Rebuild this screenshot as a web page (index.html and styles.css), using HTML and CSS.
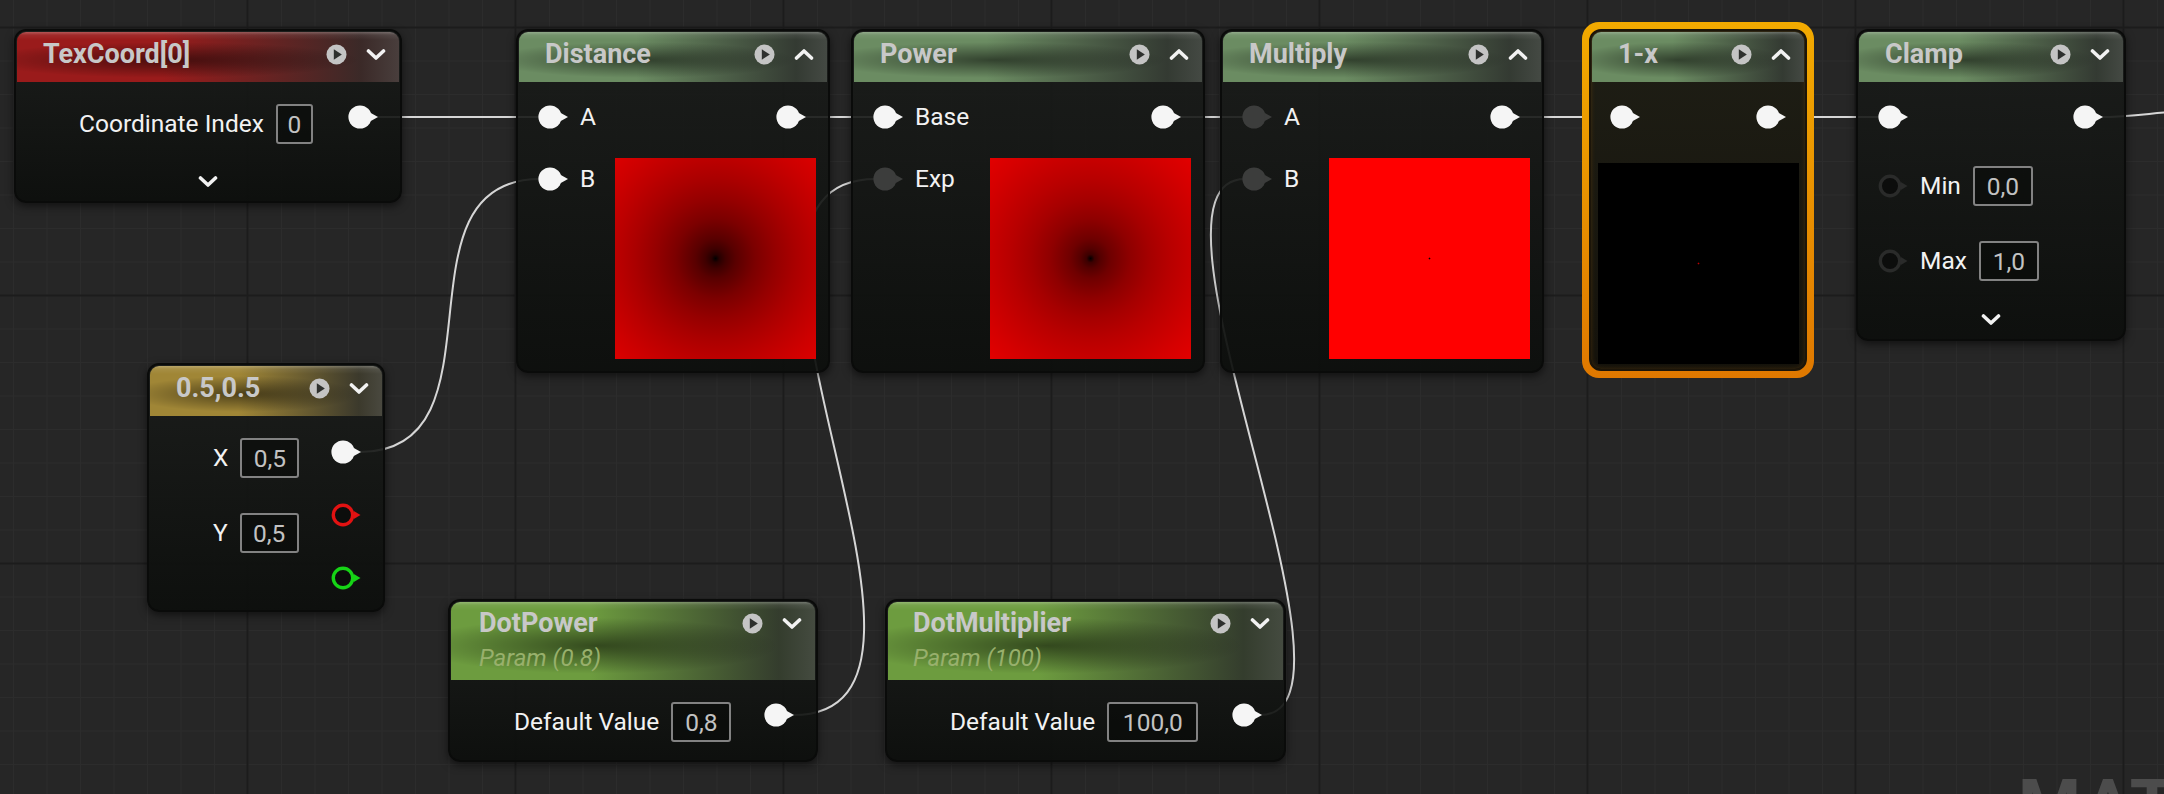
FILE: index.html
```html
<!DOCTYPE html>
<html>
<head>
<meta charset="utf-8">
<link rel="stylesheet" href="styles.css">
</head>
<body>
<svg class="defs" width="0" height="0">
  <defs>
    <radialGradient id="pg" cx="45%" cy="40%" r="60%">
      <stop offset="0" stop-color="#ffffff"/>
      <stop offset="0.7" stop-color="#f4f4f4"/>
      <stop offset="1" stop-color="#d0d0d0"/>
    </radialGradient>
    <symbol id="pin" viewBox="0 0 31 24"><circle cx="12" cy="12" r="11.6" fill="currentColor"/><path d="M22.4 7.8 L30 12 L22.4 16.2Z" fill="currentColor"/></symbol>
    <symbol id="ring" viewBox="0 0 31 24"><circle cx="12" cy="12" r="9.7" fill="#0c0d0c" stroke="currentColor" stroke-width="3.4"/><path d="M22.8 8 L29.5 12 L22.8 16Z" fill="currentColor"/></symbol>
    <symbol id="play" viewBox="0 0 22 22"><circle cx="11" cy="11" r="10.5" fill="currentColor"/><path d="M8.2 5.6 L16.6 11 L8.2 16.4Z" fill="#2e302e"/></symbol>
    <symbol id="chev" viewBox="0 0 20 13"><path d="M2.5 3 L10 10 L17.5 3" fill="none" stroke="currentColor" stroke-width="3.6" stroke-linecap="round" stroke-linejoin="round"/></symbol>
    <symbol id="chevup" viewBox="0 0 20 13"><path d="M2.5 10 L10 3 L17.5 10" fill="none" stroke="currentColor" stroke-width="3.6" stroke-linecap="round" stroke-linejoin="round"/></symbol>
  </defs>
</svg>

<div class="canvas">
  <svg class="wires" width="2164" height="794" viewBox="0 0 2164 794">
    <path d="M372 117 L540 117"/>
    <path d="M360 452 C511 452 388 179 540 179"/>
    <path d="M800 117 L876 117"/>
    <path d="M793 715 C1000 715 668 179 876 179"/>
    <path d="M1175 117 L1245 117"/>
    <path d="M1260 715 C1384 715 1121 179 1245 179"/>
    <path d="M1514 117 L1613 117"/>
    <path d="M1780 117 L1881 117"/>
    <path d="M2098 117 C2134 117 2150 113 2170 112"/>
  </svg>

  <!-- TexCoord -->
  <div class="node n-texcoord">
    <div class="hdr h-red"><span class="title">TexCoord[0]</span><svg class="play"><use href="#play"/></svg><svg class="chev"><use href="#chev"/></svg></div>
    <div class="body col">
      <div class="io io-tc">
        <div class="ins"><div class="prop"><span class="lbl">Coordinate Index</span><span class="val w37">0</span></div></div>
        <div class="outs"><svg class="pin"><use href="#pin"/></svg></div>
      </div>
      <svg class="chev more"><use href="#chev"/></svg>
    </div>
  </div>

  <!-- Distance -->
  <div class="node n-distance">
    <div class="hdr h-green"><span class="title">Distance</span><svg class="play"><use href="#play"/></svg><svg class="chev"><use href="#chevup"/></svg></div>
    <div class="body op">
      <div class="ins pins">
        <div class="pinrow"><svg class="pin"><use href="#pin"/></svg><span class="lbl">A</span></div>
        <div class="pinrow"><svg class="pin"><use href="#pin"/></svg><span class="lbl">B</span></div>
      </div>
      <div class="outs prevcol">
        <svg class="pin outpin"><use href="#pin"/></svg>
        <div class="preview p-dist"></div>
      </div>
    </div>
  </div>

  <!-- Power -->
  <div class="node n-power">
    <div class="hdr h-green"><span class="title">Power</span><svg class="play"><use href="#play"/></svg><svg class="chev"><use href="#chevup"/></svg></div>
    <div class="body op">
      <div class="ins pins">
        <div class="pinrow"><svg class="pin"><use href="#pin"/></svg><span class="lbl">Base</span></div>
        <div class="pinrow"><svg class="pin dim"><use href="#pin"/></svg><span class="lbl">Exp</span></div>
      </div>
      <div class="outs prevcol">
        <svg class="pin outpin"><use href="#pin"/></svg>
        <div class="preview p-pow"></div>
      </div>
    </div>
  </div>

  <!-- Multiply -->
  <div class="node n-multiply">
    <div class="hdr h-green"><span class="title">Multiply</span><svg class="play"><use href="#play"/></svg><svg class="chev"><use href="#chevup"/></svg></div>
    <div class="body op">
      <div class="ins pins">
        <div class="pinrow"><svg class="pin dim"><use href="#pin"/></svg><span class="lbl">A</span></div>
        <div class="pinrow"><svg class="pin dim"><use href="#pin"/></svg><span class="lbl">B</span></div>
      </div>
      <div class="outs prevcol">
        <svg class="pin outpin"><use href="#pin"/></svg>
        <div class="preview p-mul"></div>
      </div>
    </div>
  </div>

  <!-- 1-x (selected) -->
  <div class="sel">
    <div class="node n-onex">
      <div class="hdr h-green"><span class="title">1-x</span><svg class="play"><use href="#play"/></svg><svg class="chev"><use href="#chevup"/></svg></div>
      <div class="body col">
        <div class="io io-onex"><svg class="pin"><use href="#pin"/></svg><svg class="pin"><use href="#pin"/></svg></div>
        <div class="preview p-onex"></div>
      </div>
    </div>
  </div>

  <!-- Clamp -->
  <div class="node n-clamp">
    <div class="hdr h-green"><span class="title">Clamp</span><svg class="play"><use href="#play"/></svg><svg class="chev"><use href="#chev"/></svg></div>
    <div class="body col">
      <div class="io io-clamp"><svg class="pin"><use href="#pin"/></svg><svg class="pin"><use href="#pin"/></svg></div>
      <div class="prop cprop cmin"><svg class="pin ring-dk"><use href="#ring"/></svg><span class="lbl">Min</span><span class="val w60">0,0</span></div>
      <div class="prop cprop cmax"><svg class="pin ring-dk"><use href="#ring"/></svg><span class="lbl">Max</span><span class="val w60">1,0</span></div>
      <svg class="chev more more-clamp"><use href="#chev"/></svg>
    </div>
  </div>

  <!-- 0.5,0.5 -->
  <div class="node n-const">
    <div class="hdr h-gold"><span class="title">0.5,0.5</span><svg class="play"><use href="#play"/></svg><svg class="chev"><use href="#chev"/></svg></div>
    <div class="body io io-const">
      <div class="ins vals">
        <div class="prop"><span class="lbl">X</span><span class="val w59">0,5</span></div>
        <div class="prop"><span class="lbl">Y</span><span class="val w59">0,5</span></div>
      </div>
      <div class="outs couts">
        <svg class="pin"><use href="#pin"/></svg>
        <svg class="pin ring-red"><use href="#ring"/></svg>
        <svg class="pin ring-grn"><use href="#ring"/></svg>
      </div>
    </div>
  </div>

  <!-- DotPower -->
  <div class="node n-dotpower">
    <div class="hdr hdr2 h-param">
      <div class="tcol"><span class="title">DotPower</span><span class="sub">Param (0.8)</span></div>
      <svg class="play"><use href="#play"/></svg><svg class="chev"><use href="#chev"/></svg>
    </div>
    <div class="body io io-param">
      <div class="ins"><div class="prop"><span class="lbl">Default Value</span><span class="val w60">0,8</span></div></div>
      <div class="outs"><svg class="pin"><use href="#pin"/></svg></div>
    </div>
  </div>

  <!-- DotMultiplier -->
  <div class="node n-dotmul">
    <div class="hdr hdr2 h-param">
      <div class="tcol"><span class="title">DotMultiplier</span><span class="sub">Param (100)</span></div>
      <svg class="play"><use href="#play"/></svg><svg class="chev"><use href="#chev"/></svg>
    </div>
    <div class="body io io-param">
      <div class="ins"><div class="prop"><span class="lbl">Default Value</span><span class="val w91">100,0</span></div></div>
      <div class="outs"><svg class="pin"><use href="#pin"/></svg></div>
    </div>
  </div>

  <div class="watermark">MATERIAL</div>
</div>
</body>
</html>
```

FILE: styles.css
```css
* { box-sizing: border-box; }
html, body { margin: 0; padding: 0; }
body {
  width: 2164px; height: 794px; overflow: hidden;
  background: #262626;
  font-family: Roboto, "Noto Sans", "Liberation Sans", sans-serif;
}
.defs { position: absolute; width: 0; height: 0; }

.canvas {
  position: relative;
  width: 2164px; height: 794px; overflow: hidden;
  background-color: #262626;
  background-image:
    linear-gradient(to right, #1c1c1c 0, #1c1c1c 2px, transparent 2px),
    linear-gradient(to bottom, #1c1c1c 0, #1c1c1c 2px, transparent 2px),
    linear-gradient(to right, #2c2c2c 0, #2c2c2c 1px, transparent 1px),
    linear-gradient(to bottom, #2c2c2c 0, #2c2c2c 1px, transparent 1px);
  background-size: 268px 100%, 100% 268px, 33.5px 100%, 100% 33.5px;
  background-position: 246.5px 0, 0 26.5px, 13px 0, 0 27px;
}

.wires { position: absolute; left: 0; top: 0; z-index: 0; }
.wires path { fill: none; stroke: #d6d6d6; stroke-width: 2; }

/* ---------- nodes ---------- */
.node {
  position: absolute; z-index: 1;
  display: flex; flex-direction: column;
  border: 2px solid #0a0b0a;
  border-radius: 12px;
  padding: 1px;
  background: linear-gradient(to bottom, rgba(26,28,26,0.9), rgba(12,14,12,0.93));
  box-shadow: 0 3px 9px rgba(0,0,0,0.55);
}

.hdr {
  flex: none;
  height: 50px;
  border-radius: 9px 9px 0 0;
  display: flex; align-items: center;
  padding: 0 13px 6px 26px;
  background:
    linear-gradient(to bottom, rgba(255,255,255,0.26) 0, rgba(255,255,255,0.07) 3px, rgba(255,255,255,0) 8px),
    radial-gradient(ellipse 50% 36% at 40% 56%, rgba(0,0,0,0.52), rgba(0,0,0,0)),
    linear-gradient(to right, rgba(42,44,42,0) 38%, rgba(42,44,42,0.85) 90%, rgba(64,66,64,0.9) 100%),
    var(--hc);
}
.h-red { --hc: #9a1b1b; }
.h-green { --hc: #6b8c62; }
.h-param { --hc: #6d9c3f; }
.h-gold { --hc: #a08636; }

.title {
  flex: 1;
  font-weight: 700; font-size: 27px; line-height: 32px;
  color: #c8c8c8; white-space: nowrap;
}
.play { flex: none; width: 21px; height: 21px; margin-right: 19px; color: #c4c4c4; }
.chev { flex: none; width: 20px; height: 13px; color: #f2f2f2; }

.hdr2 { height: 78px; align-items: flex-start; padding: 5px 13px 0 28px; }
.tcol { flex: 1; display: flex; flex-direction: column; }
.tcol .title { flex: none; }
.sub {
  margin-top: 5px;
  font-style: italic; font-size: 24px; line-height: 28px;
  color: #98b06c; white-space: nowrap;
}
.hdr2 .play { margin-top: 5.5px; }
.hdr2 .chev { margin-top: 9.5px; }

.body { flex: 1; display: flex; }
.col { flex-direction: column; }
.io { display: flex; justify-content: space-between; }
.ins { display: flex; flex-direction: column; }
.outs { display: flex; flex-direction: column; align-items: flex-end; }

.pin { flex: none; width: 31px; height: 24px; color: #f5f5f5; }
.pin.dim { color: #3c3d3c; }
.ring-dk { color: #2a2b2a; }
.ring-red { color: #e21212; }
.ring-grn { color: #16d416; }

.lbl { font-size: 24.5px; line-height: 24px; color: #f2f2f2; white-space: nowrap; }
.prop { display: flex; align-items: center; height: 40px; gap: 12px; }
.prop .lbl { line-height: 40px; }
.val {
  flex: none;
  height: 40px;
  border: 2px solid #828282; border-radius: 3px;
  background: rgba(6,7,6,0.5);
  font-size: 24.5px; color: #c2c2c2;
  display: flex; align-items: center; justify-content: center;
}
.w37 { width: 37px; }
.w59 { width: 59px; }
.w60 { width: 60px; }
.w91 { width: 91px; }

.more { align-self: center; }

/* operator nodes with preview */
.op { padding: 23px 11px 11px 18.5px; justify-content: space-between; }
.pins { gap: 38px; }
.pinrow { display: flex; align-items: center; height: 24px; gap: 11.5px; }
.prevcol .outpin { margin-right: 9px; }
.prevcol .preview { margin-top: 29px; }
.preview { flex: none; width: 201px; height: 201px; }

.p-dist {
  background: radial-gradient(circle at 50% 50%,
    #000 0px, #270000 4px, #3f0000 10px, #590000 20px, #7c0000 40px,
    #950000 60px, #aa0000 80px, #bc0000 100px, #cc0000 120px, #db0000 142px);
}
.p-pow {
  background: radial-gradient(circle at 50% 50%,
    #000 0px, #3b0000 4px, #550000 10px, #6f0000 20px, #8f0000 40px,
    #a60000 60px, #b80000 80px, #c70000 100px, #d50000 120px, #e20000 142px);
}
.p-mul { background: radial-gradient(circle at 50% 50%, #000 0, #000 0.5px, #ff0000 1.2px); }
.p-onex { background: radial-gradient(circle at 50% 50%, #c00000 0, #c00000 0.5px, #000 1.2px); align-self: center; margin-top: 34px; }

/* positions (free canvas diagram nodes) */
.n-texcoord { left: 14px; top: 29px; width: 388px; height: 174px; }
.io-tc { padding: 22px 20px 0 62px; }
.io-tc .outs { padding-top: 1px; }
.n-texcoord .more { margin-top: 31px; }

.n-distance { left: 516px; top: 29px; width: 314px; height: 344px; }
.n-power { left: 851px; top: 29px; width: 354px; height: 344px; }
.n-multiply { left: 1220px; top: 29px; width: 324px; height: 344px; }

.sel {
  position: absolute; z-index: 1;
  left: 1582px; top: 22px; width: 232px; height: 356px;
  padding: 7px;
  border-radius: 17px;
  background: linear-gradient(to bottom, #f2aa00, #df7800);
}
.n-onex {
  position: relative; width: 100%; height: 100%;
  border-color: #1c1509;
  background: linear-gradient(to bottom, rgba(24,26,22,0.97), rgba(14,15,12,0.97));
  box-shadow: inset 0 0 5px rgba(160,100,10,0.3);
}
.io-onex { padding: 23px 17px 0 18px; }

.n-clamp { left: 1856px; top: 29px; width: 270px; height: 312px; }
.io-clamp { padding: 23px 19px 0 19px; }
.cprop { padding-left: 19px; }
.cprop .pin { margin-right: -1px; }
.cmin { margin-top: 37px; }
.cmax { margin-top: 35px; }
.more-clamp { margin-top: 32px; }

.n-const { left: 147px; top: 363px; width: 238px; height: 249px; }
.io-const { padding: 22px 20px 0 63px; }
.vals { gap: 35px; }
.couts { padding-top: 2px; gap: 39px; }

.n-dotpower { left: 448px; top: 599px; width: 370px; height: 163px; }
.n-dotmul { left: 885px; top: 599px; width: 401px; height: 163px; }
.io-param { padding: 22px 20px 0 63px; }
.io-param .outs { padding-top: 1px; }
.n-dotmul .hdr2 { padding-left: 25px; }
.n-dotmul .io-param { padding-left: 62px; }

.watermark {
  position: absolute; z-index: 1;
  left: 2018px; top: 771px;
  font-weight: 700; font-size: 72px; line-height: 1;
  letter-spacing: 2px;
  color: #4c4c4c;
  white-space: nowrap;
}
```
